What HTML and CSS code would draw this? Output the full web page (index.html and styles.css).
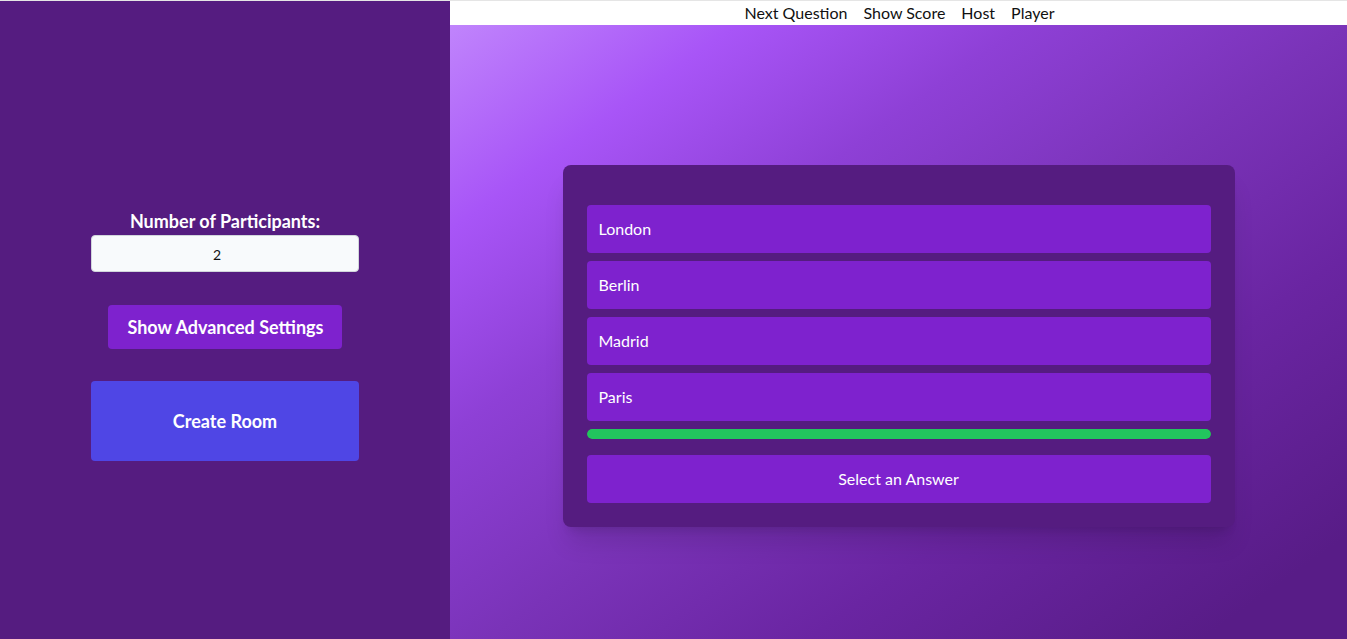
FILE: index.html
```html
<!DOCTYPE html>
<html lang="en">
<head>
<meta charset="utf-8">
<title>Quiz</title>
<link rel="stylesheet" href="styles.css">
</head>
<body>
<div class="app">
  <aside class="sidebar">
    <div class="setup">
      <label class="setup-label" for="participants">Number of Participants:</label>
      <input id="participants" class="setup-input" type="number" value="2">
      <button class="btn-advanced">Show Advanced Settings</button>
      <button class="btn-create">Create Room</button>
    </div>
  </aside>
  <div class="right">
    <nav class="topnav">
      <a href="#">Next Question</a>
      <a href="#">Show Score</a>
      <a href="#">Host</a>
      <a href="#">Player</a>
    </nav>
    <main class="stage">
      <section class="card">
        <h2 class="question"></h2>
        <div class="options">
          <button class="option">London</button>
          <button class="option">Berlin</button>
          <button class="option">Madrid</button>
          <button class="option">Paris</button>
        </div>
        <div class="timer"><div class="timer-fill" style="width:100%"></div></div>
        <button class="submit">Select an Answer</button>
      </section>
    </main>
  </div>
</div>
</body>
</html>
```
FILE: styles.css
```css
* { box-sizing: border-box; }
html, body { margin: 0; padding: 0; height: 100%; overflow: hidden; }
body {
  font-family: "Lato", "Noto Sans", sans-serif;
  border-top: 1px solid #e5e5e5;
  background: #fff;
}
.app {
  display: flex;
  height: 638px;
}
.sidebar {
  width: 450px;
  flex: none;
  background: #551c80;
  display: flex;
  flex-direction: column;
  justify-content: center;
  align-items: center;
  padding-top: 28px;
}
.setup {
  display: flex;
  flex-direction: column;
  align-items: center;
  width: 268px;
}
.setup-label {
  font-size: 18px;
  line-height: 28px;
  font-weight: 700;
  color: #fff;
}
.setup-input {
  width: 268px;
  height: 37px;
  border: 1px solid #d1d5db;
  border-radius: 4px;
  background: #f8fafc;
  text-align: center;
  padding: 1px 17px 0 1px;
  font-family: inherit;
  font-size: 14px;
  color: #111;
  -moz-appearance: textfield;
}
.setup-input::-webkit-outer-spin-button,
.setup-input::-webkit-inner-spin-button { -webkit-appearance: none; margin: 0; }
.btn-advanced {
  margin-top: 33px;
  height: 44px;
  padding: 0 18px 0 19px;
  border: 0;
  border-radius: 4px;
  background: #7e22ce;
  color: #fff;
  font-family: inherit;
  font-size: 18px;
  font-weight: 700;
}
.btn-create {
  margin-top: 32px;
  width: 268px;
  height: 80px;
  border: 0;
  border-radius: 4px;
  background: #4f46e5;
  color: #fff;
  font-family: inherit;
  font-size: 18px;
  font-weight: 700;
}
.right {
  flex: 1;
  display: flex;
  flex-direction: column;
  min-width: 0;
}
.topnav {
  height: 24px;
  flex: none;
  background: #fff;
  display: flex;
  justify-content: center;
  align-items: center;
  gap: 16px;
  padding-left: 2px;
}
.topnav a {
  color: #111;
  text-decoration: none;
  font-size: 16px;
  line-height: 24px;
}
.stage {
  height: 639px;
  flex: none;
  background: linear-gradient(to bottom right, #c084fc 0%, #a855f7 16%, #8e40d6 32%, #7a33b8 50%, #6a25a2 68%, #581c87 90%);
  display: flex;
  justify-content: center;
  align-items: flex-start;
  padding-top: 140px;
}
.card {
  width: 672px;
  background: #551c80;
  border-radius: 8px;
  padding: 24px;
  box-shadow: 0 20px 25px -5px rgba(0,0,0,0.12), 0 8px 10px -6px rgba(0,0,0,0.12);
}
.question {
  margin: 0 0 16px;
  height: 0;
}
.options {
  display: flex;
  flex-direction: column;
  gap: 8px;
}
.option {
  height: 48px;
  border: 0;
  border-radius: 4px;
  background: #7e22ce;
  color: #fff;
  text-align: left;
  padding: 0 12px 2px;
  font-family: inherit;
  font-size: 16px;
}
.timer {
  margin-top: 8px;
  height: 10px;
  border-radius: 999px;
  background: #4b5563;
  overflow: hidden;
}
.timer-fill {
  height: 100%;
  background: #22c55e;
  border-radius: 999px;
}
.submit {
  margin-top: 16px;
  width: 100%;
  height: 48px;
  border: 0;
  border-radius: 4px;
  background: #7e22ce;
  color: #fff;
  padding-bottom: 2px;
  font-family: inherit;
  font-size: 16px;
}
```
